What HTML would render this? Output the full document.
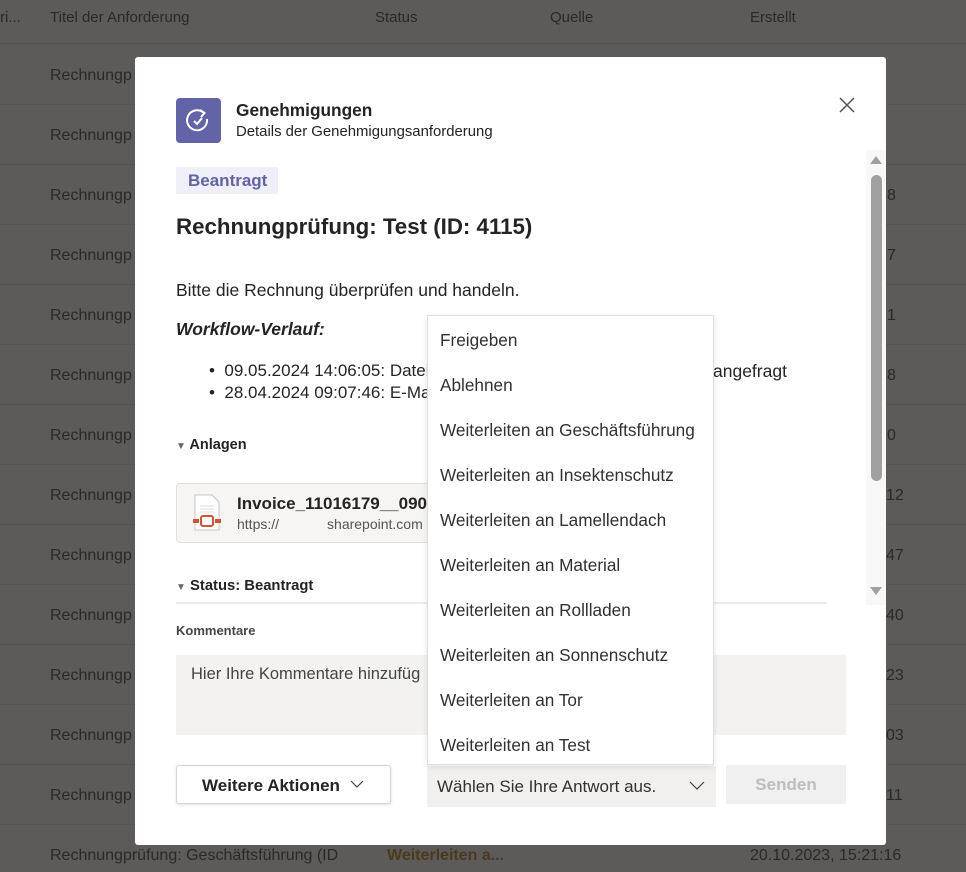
<!DOCTYPE html>
<html><head><meta charset="utf-8"><style>
*{margin:0;padding:0;box-sizing:border-box}
body{width:966px;height:872px;overflow:hidden;background:#5c5b59;font-family:"Liberation Sans",sans-serif;color:#252423;position:relative}
.bg{position:absolute;font-size:15px;color:#2a2928;white-space:nowrap}
.line{position:absolute;left:0;width:966px;height:1px;background:#555452}
.modal{position:absolute;left:135px;top:57px;width:751px;height:788px;background:#fff;border-radius:3px}
.a{position:absolute;white-space:nowrap}
.dd{position:absolute;left:427px;top:315px;width:287px;height:450px;background:#fff;border:1px solid #e1dfdd;box-shadow:0 2px 6px rgba(0,0,0,.1)}
.dd div{position:absolute;left:12px;font-size:17.2px;color:#323130}
</style></head><body>
<div class="bg" style="left:0;top:9px">ri...</div>
<div class="bg" style="left:50px;top:9px">Titel der Anforderung</div>
<div class="bg" style="left:375px;top:9px">Status</div>
<div class="bg" style="left:550px;top:9px">Quelle</div>
<div class="bg" style="left:750px;top:9px">Erstellt</div>
<div class="line" style="top:43px"></div>
<div class="bg" style="left:50px;top:67px;font-size:16px">Rechnungp</div>
<div class="bg" style="left:50px;top:127px;font-size:16px">Rechnungp</div>
<div class="bg" style="left:50px;top:187px;font-size:16px">Rechnungp</div>
<div class="bg" style="left:50px;top:247px;font-size:16px">Rechnungp</div>
<div class="bg" style="left:50px;top:307px;font-size:16px">Rechnungp</div>
<div class="bg" style="left:50px;top:367px;font-size:16px">Rechnungp</div>
<div class="bg" style="left:50px;top:427px;font-size:16px">Rechnungp</div>
<div class="bg" style="left:50px;top:487px;font-size:16px">Rechnungp</div>
<div class="bg" style="left:50px;top:547px;font-size:16px">Rechnungp</div>
<div class="bg" style="left:50px;top:607px;font-size:16px">Rechnungp</div>
<div class="bg" style="left:50px;top:667px;font-size:16px">Rechnungp</div>
<div class="bg" style="left:50px;top:727px;font-size:16px">Rechnungp</div>
<div class="bg" style="left:50px;top:787px;font-size:16px">Rechnungp</div>
<div class="bg" style="left:50px;top:847px;font-size:16px">Rechnungprüfung: Geschäftsführung (ID</div>
<div class="bg" style="left:387px;top:847px;font-size:16px;color:#4a3a1c;font-weight:bold">Weiterleiten a...</div>
<div class="bg" style="left:750px;top:847px;font-size:16px">20.10.2023, 15:21:16</div>
<div class="bg" style="left:887px;top:187px;font-size:16px">8</div>
<div class="bg" style="left:887px;top:247px;font-size:16px">7</div>
<div class="bg" style="left:887px;top:307px;font-size:16px">1</div>
<div class="bg" style="left:887px;top:367px;font-size:16px">8</div>
<div class="bg" style="left:887px;top:427px;font-size:16px">0</div>
<div class="bg" style="left:886px;top:487px;font-size:16px">12</div>
<div class="bg" style="left:886px;top:547px;font-size:16px">47</div>
<div class="bg" style="left:886px;top:607px;font-size:16px">40</div>
<div class="bg" style="left:886px;top:667px;font-size:16px">23</div>
<div class="bg" style="left:886px;top:727px;font-size:16px">03</div>
<div class="bg" style="left:886px;top:787px;font-size:16px">11</div>
<div class="line" style="top:104px"></div><div class="line" style="top:164px"></div><div class="line" style="top:224px"></div><div class="line" style="top:284px"></div><div class="line" style="top:344px"></div><div class="line" style="top:404px"></div><div class="line" style="top:464px"></div><div class="line" style="top:524px"></div><div class="line" style="top:584px"></div><div class="line" style="top:644px"></div><div class="line" style="top:704px"></div><div class="line" style="top:764px"></div><div class="line" style="top:824px"></div>

<div class="modal"></div>
<div class="a" style="left:176px;top:98px;width:45px;height:45px;background:#6264a7;border-radius:4px">
<svg width="45" height="45" viewBox="0 0 45 45"><path d="M28 15 A10 10 0 1 0 31 21" fill="none" stroke="#fff" stroke-width="2"/><path d="M24 12 L28.5 15 L25 19" fill="none" stroke="#fff" stroke-width="2"/><path d="M18 23 L21 26 L26 20" fill="none" stroke="#fff" stroke-width="2"/></svg></div>
<div class="a" style="left:236px;top:100px;font-size:17.3px;font-weight:bold">Genehmigungen</div>
<div class="a" style="left:236px;top:124px;font-size:14.9px">Details der Genehmigungsanforderung</div>
<svg class="a" style="left:838px;top:96px" width="18" height="18"><path d="M2 2L16 16M16 2L2 16" stroke="#555" stroke-width="1.5"/></svg>
<div class="a" style="left:176px;top:167px;width:102px;height:27px;background:#efeff8;color:#6264a7;font-size:17px;font-weight:bold;padding:4px 12px">Beantragt</div>
<div class="a" style="left:176px;top:214px;font-size:22.3px;font-weight:bold">Rechnungprüfung: Test (ID: 4115)</div>
<div class="a" style="left:176px;top:280px;font-size:17.5px">Bitte die Rechnung überprüfen und handeln.</div>
<div class="a" style="left:176px;top:319px;font-size:17.5px;font-weight:bold;font-style:italic">Workflow-Verlauf:</div>
<div class="a" style="left:209px;top:361px;font-size:17px">•&nbsp;&nbsp;09.05.2024 14:06:05: Datei</div>
<div class="a" style="left:209px;top:383px;font-size:17px">•&nbsp;&nbsp;28.04.2024 09:07:46: E-Ma</div>
<div class="a" style="left:713px;top:361px;font-size:17.5px">angefragt</div>
<div class="a" style="left:176px;top:437px;font-size:14.5px;font-weight:bold"><span style="font-size:10px;color:#666">▼</span> Anlagen</div>
<div class="a" style="left:176px;top:483px;width:260px;height:60px;background:#f6f5f4;border:1px solid #e1dfdd;border-radius:4px"></div>
<svg class="a" style="left:192px;top:494px" width="32" height="38"><path d="M3 1H20L27 8V36H3Z" fill="#fff" stroke="#c8c6c4"/><path d="M8 12H22M8 15H22M8 18H22" stroke="#ddd"/><rect x="1" y="25" width="6" height="4" fill="#d35230"/><rect x="23" y="25" width="6" height="4" fill="#d35230"/><rect x="9" y="22" width="12" height="10" rx="2" fill="none" stroke="#d35230" stroke-width="2"/></svg>
<div class="a" style="left:237px;top:494px;font-size:17px;font-weight:bold">Invoice_11016179__09052</div>
<div class="a" style="left:237px;top:516px;font-size:14px;color:#555">https://<span style="display:inline-block;width:48px"></span>sharepoint.com</div>
<div class="a" style="left:176px;top:578px;font-size:14.8px;font-weight:bold"><span style="font-size:10px;color:#666">▼</span> Status: Beantragt</div>
<div class="a" style="left:176px;top:602px;width:651px;height:2px;background:#edebe9"></div>
<div class="a" style="left:176px;top:623px;font-size:13px;font-weight:bold;color:#484644">Kommentare</div>
<div class="a" style="left:176px;top:655px;width:670px;height:80px;background:#f3f2f1"></div>
<div class="a" style="left:191px;top:665px;font-size:16.5px;color:#444">Hier Ihre Kommentare hinzufüg</div>
<div class="a" style="left:176px;top:765px;width:215px;height:39px;background:#fff;border:1px solid #d6d4d2;border-radius:3px;box-shadow:0 1px 3px rgba(0,0,0,.12);font-size:17px;font-weight:bold;padding:10px 0 0 25px">Weitere Aktionen</div>
<svg class="a" style="left:350px;top:780px" width="14" height="9"><path d="M1 1L7 7L13 1" fill="none" stroke="#444" stroke-width="1.2"/></svg>
<div class="a" style="left:427px;top:766px;width:289px;height:41px;background:#f1f0ef;font-size:17px;padding:11px 0 0 10px;color:#323130">Wählen Sie Ihre Antwort aus.</div>
<svg class="a" style="left:689px;top:781px" width="16" height="10"><path d="M1 1L8 8L15 1" fill="none" stroke="#444" stroke-width="1.2"/></svg>
<div class="a" style="left:726px;top:765px;width:120px;height:39px;background:#f0f0f0;color:#bdbdbd;font-size:17px;font-weight:bold;text-align:center;padding-top:10px">Senden</div>
<div class="a" style="left:866px;top:150px;width:20px;height:455px;background:#f8f8f8"></div>
<div class="a" style="left:870px;top:156px;width:0;height:0;border-left:6px solid transparent;border-right:6px solid transparent;border-bottom:8px solid #a0a0a0"></div>
<div class="a" style="left:871px;top:175px;width:11px;height:306px;background:#a0a0a0;border-radius:6px"></div>
<div class="a" style="left:870px;top:587px;width:0;height:0;border-left:6px solid transparent;border-right:6px solid transparent;border-top:8px solid #a0a0a0"></div>
<div class="dd">
<div style="top:14px">Freigeben</div>
<div style="top:59px">Ablehnen</div>
<div style="top:104px">Weiterleiten an Geschäftsführung</div>
<div style="top:149px">Weiterleiten an Insektenschutz</div>
<div style="top:194px">Weiterleiten an Lamellendach</div>
<div style="top:239px">Weiterleiten an Material</div>
<div style="top:284px">Weiterleiten an Rollladen</div>
<div style="top:329px">Weiterleiten an Sonnenschutz</div>
<div style="top:374px">Weiterleiten an Tor</div>
<div style="top:419px">Weiterleiten an Test</div>
</div>
</body></html>
